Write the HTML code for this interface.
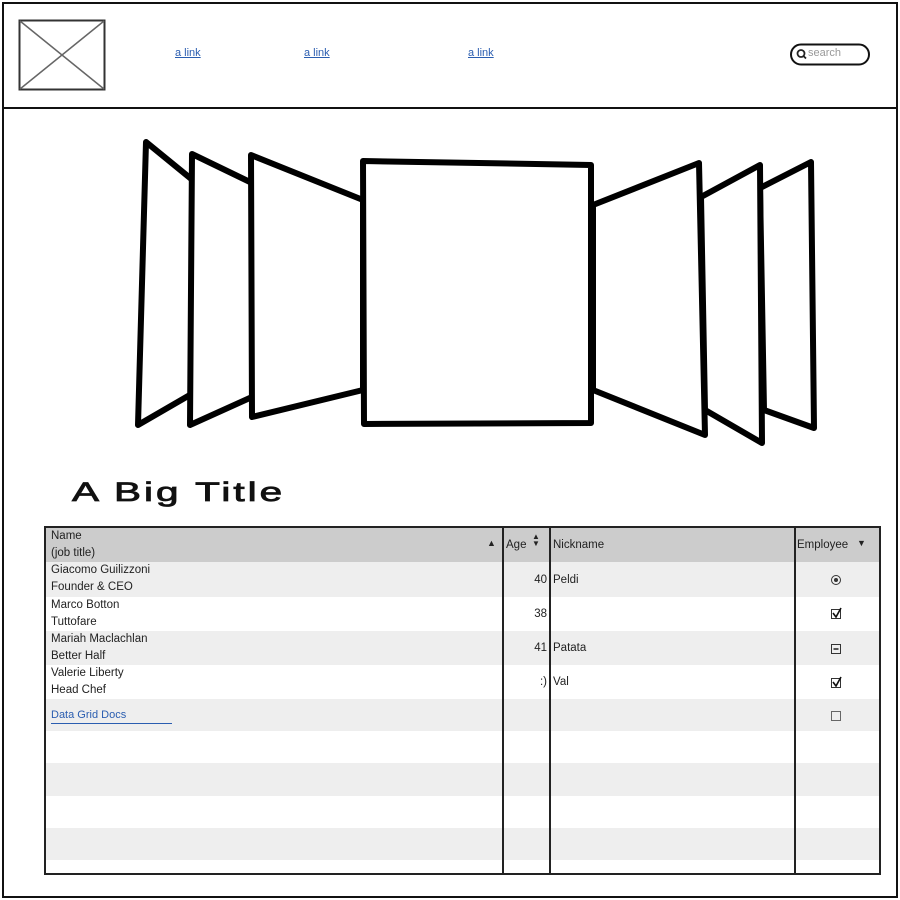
<!DOCTYPE html>
<html><head><meta charset="utf-8"><style>
*{margin:0;padding:0;box-sizing:border-box}
body{width:900px;height:900px;background:#fff;position:relative;overflow:hidden;font-family:"Liberation Sans",sans-serif;color:#222}
.abs{position:absolute}
.link{color:#2a5db0;text-decoration:underline;font-size:11px}
.t{font-size:11.5px;line-height:17px}
</style></head><body>
<div class="abs" style="left:2px;top:2px;width:896px;height:896px;border:2px solid #111"></div>
<div class="abs" style="left:2px;top:2px;width:896px;height:107px;border:2px solid #111"></div>
<svg class="abs" style="left:0;top:0" width="900" height="120">
<rect x="19.5" y="20.5" width="85" height="69" fill="none" stroke="#333" stroke-width="2"/>
<line x1="20" y1="21" x2="104" y2="89" stroke="#666" stroke-width="1.5"/>
<line x1="104" y1="21" x2="20" y2="89" stroke="#666" stroke-width="1.5"/>
<rect x="791" y="44.5" width="78" height="20" rx="10" fill="none" stroke="#111" stroke-width="2"/>
<circle cx="801" cy="53.5" r="3.5" fill="none" stroke="#222" stroke-width="1.8"/>
<line x1="803.5" y1="56" x2="806" y2="58.5" stroke="#222" stroke-width="1.8"/>
</svg>
<div class="abs" style="left:808px;top:47px;font-size:11px;color:#999">search</div>
<div class="abs link" style="left:175px;top:47px">a link</div>
<div class="abs link" style="left:304px;top:47px">a link</div>
<div class="abs link" style="left:468px;top:47px">a link</div>
<svg class="abs" style="left:0;top:0" width="900" height="470">
<g fill="#fff" stroke="#000" stroke-width="6" stroke-linejoin="round">
<polygon points="146,142 195,182 195,392 138,425"/>
<polygon points="192,154 252,183 252,397 190,425"/>
<polygon points="251,155 363,200 363,390 252,417"/>
<polygon points="811,162 814,428 764,410 760,188"/>
<polygon points="760,165 762,443 705,410 701,197"/>
<polygon points="699,163 705,435 593,390 593,205"/>
<polygon points="363,161 591,165 591,423 364,424"/>
</g>
</svg>
<div class="abs" style="left:72px;top:477px;font-size:27px;letter-spacing:2px;color:#111;-webkit-text-stroke:0.8px #111;transform:scaleX(1.5);transform-origin:0 0;white-space:nowrap">A Big Title</div>
<div class="abs" style="left:44px;top:526px;width:837px;height:349px;border:2px solid #222;overflow:hidden">
<div class="abs" style="left:0;top:0;width:833px;height:34px;background:#ccc"></div>
<div class="abs" style="left:0;top:34px;width:833px;height:35px;background:#eee"></div>
<div class="abs" style="left:0;top:103px;width:833px;height:34px;background:#eee"></div>
<div class="abs" style="left:0;top:171px;width:833px;height:32px;background:#eee"></div>
<div class="abs" style="left:0;top:235px;width:833px;height:33px;background:#eee"></div>
<div class="abs" style="left:0;top:300px;width:833px;height:32px;background:#eee"></div>
<div class="abs" style="left:456px;top:0;width:2px;height:349px;background:#222"></div>
<div class="abs" style="left:503px;top:0;width:2px;height:349px;background:#222"></div>
<div class="abs" style="left:748px;top:0;width:2px;height:349px;background:#222"></div>
<div class="abs t" style="left:5px;top:0">Name<br>(job title)</div>
<div class="abs" style="left:441px;top:10px;font-size:9px">▲</div>
<div class="abs t" style="left:460px;top:9px">Age</div>
<div class="abs" style="left:486px;top:5px;font-size:8px;line-height:7px">▲<br>▼</div>
<div class="abs t" style="left:507px;top:9px">Nickname</div>
<div class="abs t" style="left:751px;top:9px">Employee</div>
<div class="abs" style="left:811px;top:10px;font-size:9px">▼</div>
<div class="abs t" style="left:5px;top:34px">Giacomo Guilizzoni<br>Founder &amp; CEO</div>
<div class="abs t" style="left:5px;top:69px">Marco Botton<br>Tuttofare</div>
<div class="abs t" style="left:5px;top:103px">Mariah Maclachlan<br>Better Half</div>
<div class="abs t" style="left:5px;top:137px">Valerie Liberty<br>Head Chef</div>
<div class="abs link" style="left:5px;top:180px;text-decoration:none;border-bottom:1px solid #2a5db0;width:121px;line-height:15px">Data Grid Docs</div>
<div class="abs t" style="left:460px;top:44px;width:41px;text-align:right">40</div>
<div class="abs t" style="left:460px;top:78px;width:41px;text-align:right">38</div>
<div class="abs t" style="left:460px;top:112px;width:41px;text-align:right">41</div>
<div class="abs t" style="left:460px;top:146px;width:41px;text-align:right">:)</div>
<div class="abs t" style="left:507px;top:44px">Peldi</div>
<div class="abs t" style="left:507px;top:112px">Patata</div>
<div class="abs t" style="left:507px;top:146px">Val</div>
<svg class="abs" style="left:780px;top:40px" width="20" height="160">
<circle cx="10" cy="12" r="4.5" fill="none" stroke="#333"/><circle cx="10" cy="12" r="2" fill="#333"/>
<rect x="5.5" y="41.5" width="9" height="9" fill="none" stroke="#333"/><path d="M7 45 L10 49 L15 40" fill="none" stroke="#111" stroke-width="1.6"/>
<rect x="5.5" y="76.5" width="9" height="9" fill="none" stroke="#333"/><line x1="7.5" y1="81" x2="12.5" y2="81" stroke="#111" stroke-width="1.4"/>
<rect x="5.5" y="110.5" width="9" height="9" fill="none" stroke="#333"/><path d="M7 114 L10 118 L15 109" fill="none" stroke="#111" stroke-width="1.6"/>
<rect x="5.5" y="143.5" width="9" height="9" fill="none" stroke="#666"/>
</svg>
</div>
</body></html>
